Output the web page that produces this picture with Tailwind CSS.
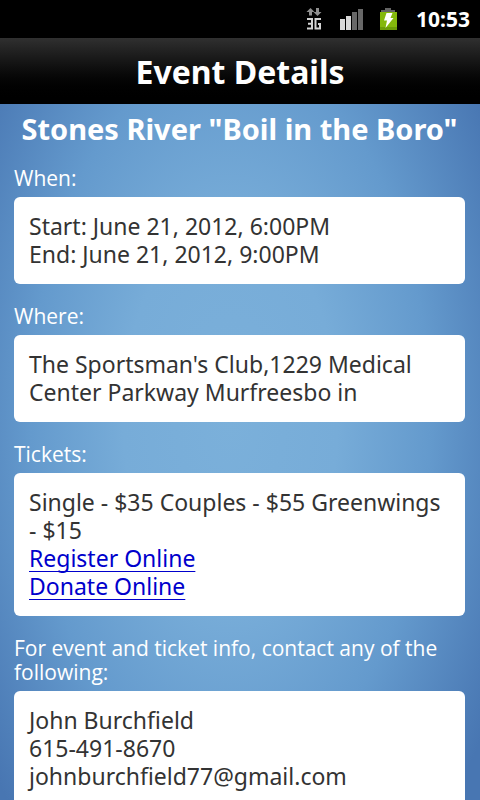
<!DOCTYPE html>
<html lang="en">
<head>
  <meta charset="UTF-8">
  <meta name="viewport" content="width=device-width, initial-scale=1.0">
  <title>Event Details</title>
  <script src="https://cdn.jsdelivr.net/npm/@tailwindcss/browser@4"></script>
</head>
<body class="flex h-screen flex-col overflow-hidden bg-black font-['Noto_Sans','Open_Sans',sans-serif]">
  <!-- Status bar -->
  <div class="flex h-[38px] shrink-0 items-center justify-end bg-black pr-[10px] text-white">
    <svg class="mr-[18px]" width="16" height="24" viewBox="0 0 16 24" aria-label="3G">
      <path d="M4.500 1l4 4H6v3.500H3V5H.5zM11.500 9l-4-4H10V1h3v4h2.500z" fill="#8f8f8f"/>
      <path d="M1 12h5v9.500H1M2 16.750h4M15 12H9.500V21.500H14V17H12" fill="none" stroke="#d4d4d4" stroke-width="2"/>
    </svg>
    <svg class="mr-[14px]" width="24" height="24" viewBox="0 0 24 24" aria-label="Signal strength">
      <path d="M0 12h5v11H0zM6 9h5v14H6z" fill="#d8d8d8"/>
      <path d="M12 5h5v18h-5zM18 2h5v21h-5z" fill="#686868"/>
    </svg>
    <svg class="mr-[18px]" width="20" height="24" viewBox="0 0 20 24" aria-label="Battery charging">
      <path d="M7 1h6v2h4v3H3V3h4z" fill="#646464"/>
      <path d="M2 5h17v18H2z" fill="#84b80c"/>
      <path d="M2 20h17v3H2z" fill="#6c9c08"/>
      <path d="M8.500 6h6l-2 5h3L7.500 21 9 13.500H6z" fill="#fff"/>
    </svg>
    <span class="text-[21px] leading-6 font-bold">10:53</span>
  </div>

  <header class="flex h-[66px] shrink-0 items-center justify-center bg-linear-to-b from-[#303030] to-black pt-[2px]">
    <h1 class="text-[32px] leading-10 font-bold text-white">Event Details</h1>
  </header>

  <main class="min-h-0 flex-1 overflow-hidden bg-[#4876b2] bg-[radial-gradient(ellipse_64%_80%_at_48%_45%,#7bb0da_0%,#77acd8_35%,#649acd_65%,#4876b2_100%)] pr-[15px] pl-[14px] pt-[7px]">
    <h2 class="text-center text-[29px] leading-9 font-bold text-white">Stones River "Boil in the Boro"</h2>

    <h3 class="mt-[19px] mb-[7px] font-['Open_Sans','Noto_Sans',sans-serif] text-[21px] leading-6 text-white">When:</h3>
    <section class="rounded-md bg-white px-[15px] pt-[15px] pb-4 text-[23px] leading-7 text-[#333]">
      <p>Start: June 21, 2012, 6:00PM</p>
      <p>End: June 21, 2012, 9:00PM</p>
    </section>

    <h3 class="mt-5 mb-[7px] font-['Open_Sans','Noto_Sans',sans-serif] text-[21px] leading-6 text-white">Where:</h3>
    <section class="rounded-md bg-white px-[15px] pt-[15px] pb-4 text-[23px] leading-7 text-[#333]">
      <p>The Sportsman's Club,1229 Medical Center Parkway Murfreesbo in</p>
    </section>

    <h3 class="mt-5 mb-[7px] font-['Open_Sans','Noto_Sans',sans-serif] text-[21px] leading-6 text-white">Tickets:</h3>
    <section class="rounded-md bg-white px-[15px] pt-[15px] pb-4 text-[23px] leading-7 text-[#333]">
      <p>Single - $35 Couples - $55 Greenwings - $15</p>
      <p><a href="#register" class="text-[#0000cc] underline decoration-1 underline-offset-4 [text-decoration-skip-ink:none]">Register Online</a></p>
      <p><a href="#donate" class="text-[#0000cc] underline decoration-1 underline-offset-4 [text-decoration-skip-ink:none]">Donate Online</a></p>
    </section>

    <h3 class="mt-5 mb-[7px] font-['Open_Sans','Noto_Sans',sans-serif] text-[21px] leading-6 text-white">For event and ticket info, contact any of the following:</h3>
    <section class="rounded-md bg-white px-[15px] pt-[15px] pb-4 text-[23px] leading-7 text-[#333]">
      <p>John Burchfield</p>
      <p>615-491-8670</p>
      <p>johnburchfield77@gmail.com</p>
    </section>
  </main>
</body>
</html>
